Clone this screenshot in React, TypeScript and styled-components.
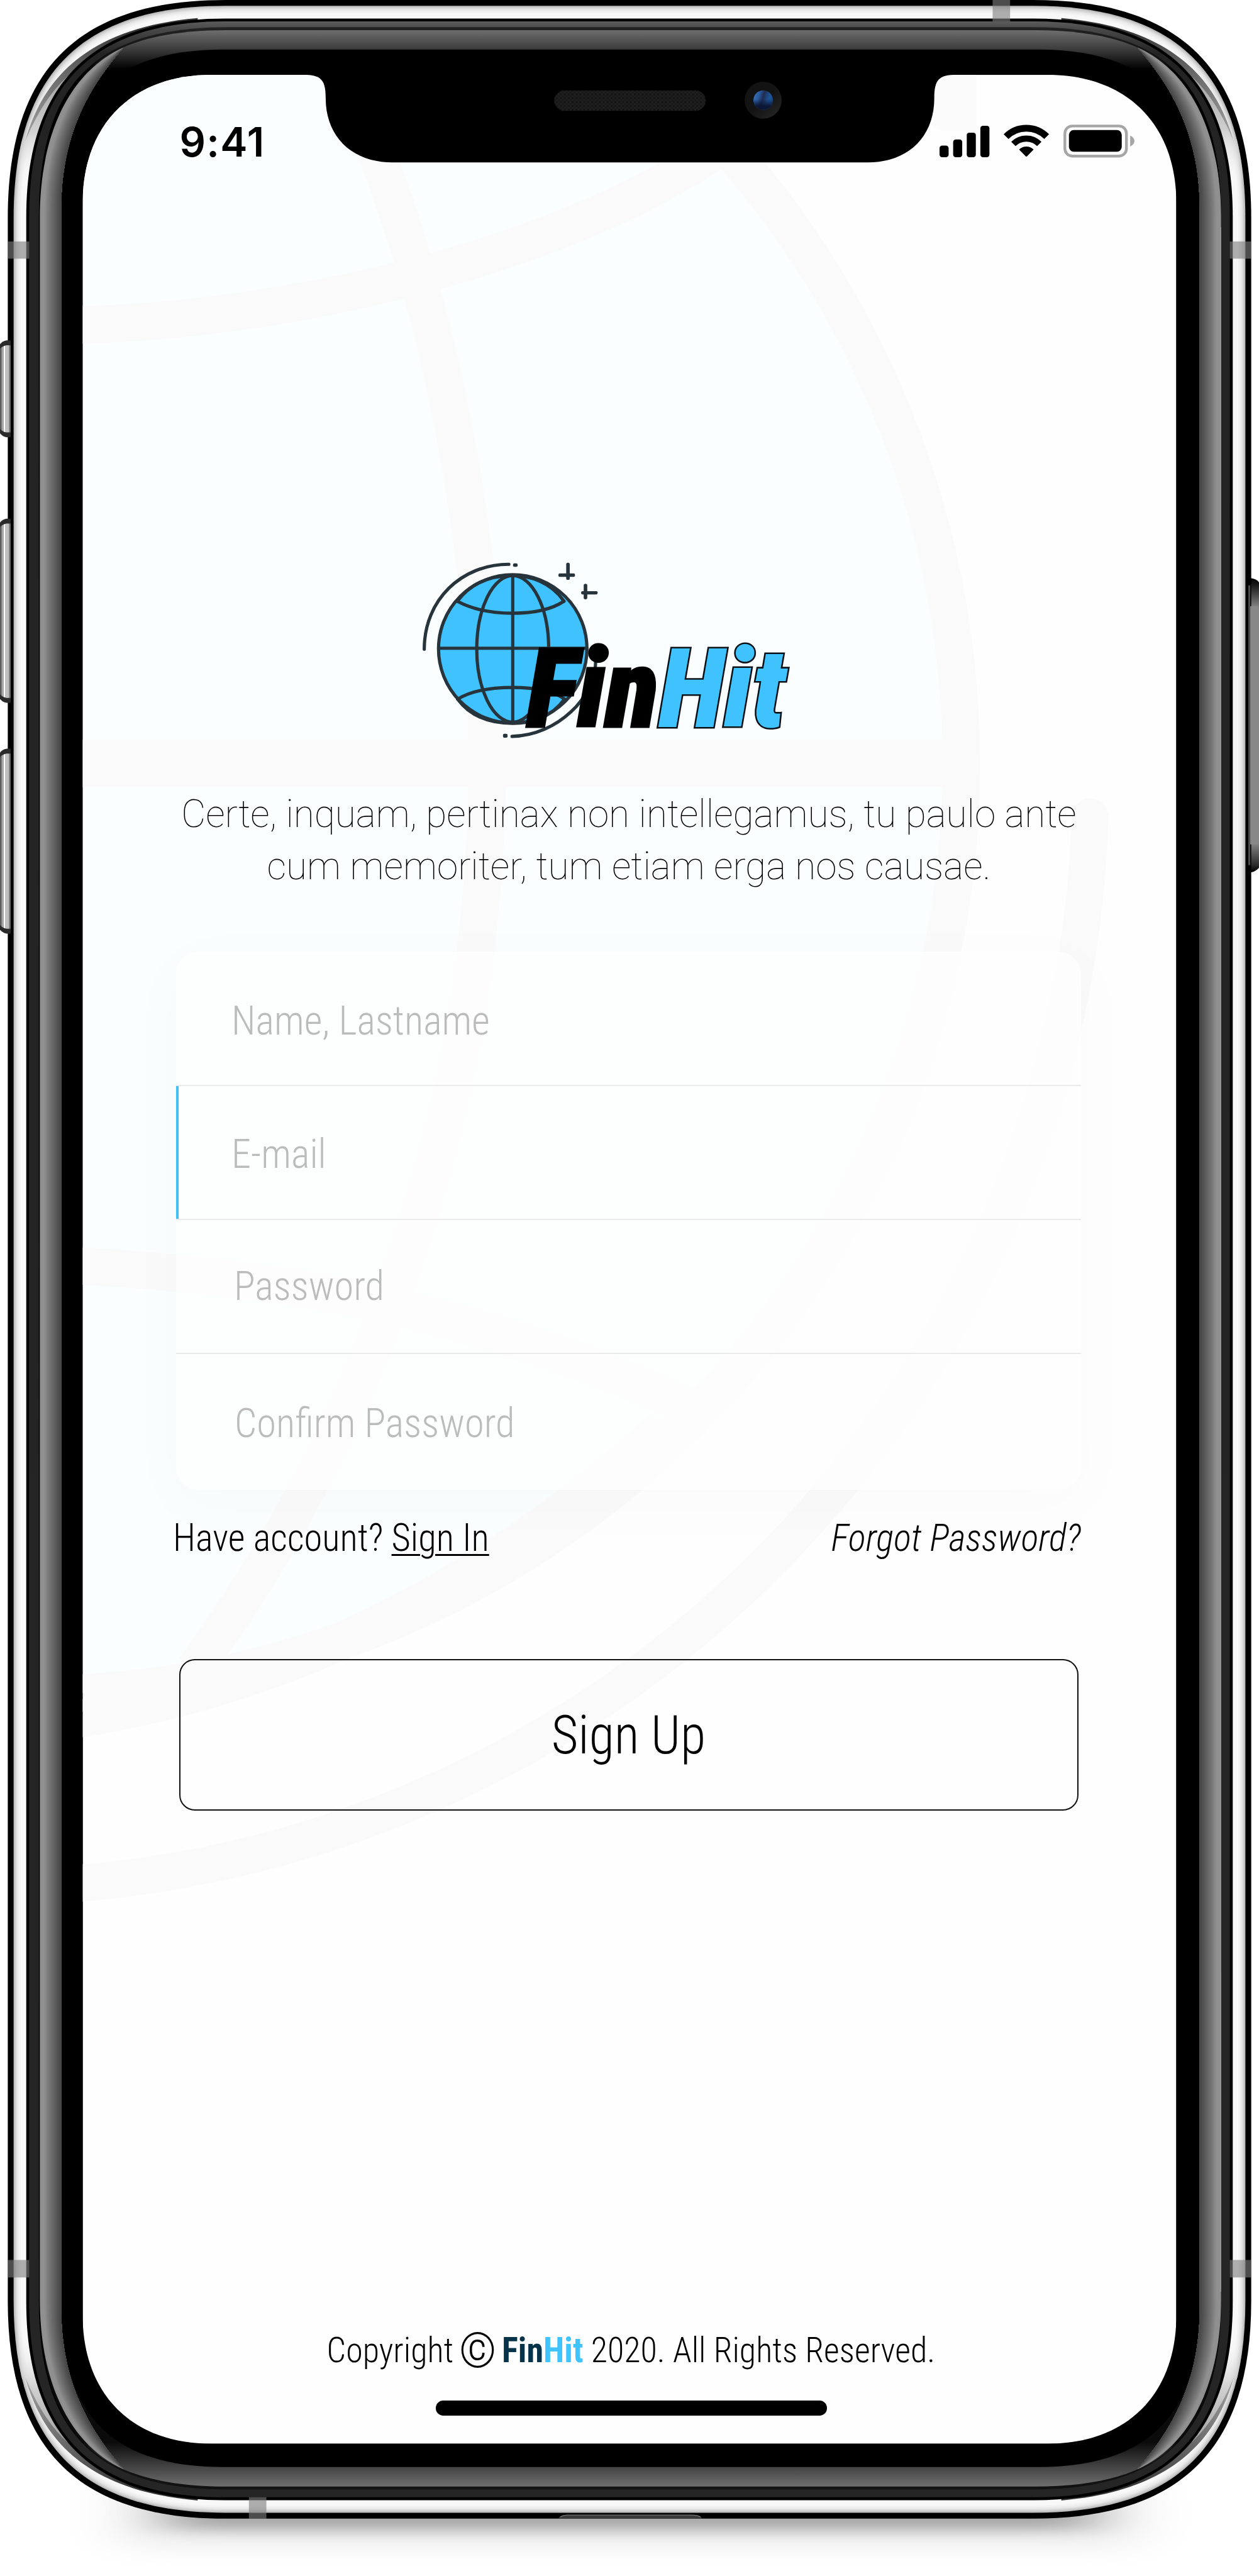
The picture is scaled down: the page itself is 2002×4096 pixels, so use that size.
import React from "react";
import styled, { createGlobalStyle } from "styled-components";

/* The artboard is 3885 x 7947 design units; everything is scaled down by one factor. */
const SCALE = 2002 / 3885;
const u = (n: number) => `${(n * SCALE).toFixed(2)}px`;

const GlobalStyle = createGlobalStyle`
  html, body { margin: 0; padding: 0; background: #fff; }
  *, *::before, *::after { box-sizing: border-box; }
`;

/* ---------- geometry helpers ---------- */

function squircle(x0: number, y0: number, x1: number, y1: number, l: number, c: number) {
  const k = l * (1 - c);
  return [
    `M${x0} ${y0 + l}`,
    `C${x0} ${y0 + k} ${x0 + k} ${y0} ${x0 + l} ${y0}`,
    `H${x1 - l}`,
    `C${x1 - k} ${y0} ${x1} ${y0 + k} ${x1} ${y0 + l}`,
    `V${y1 - l}`,
    `C${x1} ${y1 - k} ${x1 - k} ${y1} ${x1 - l} ${y1}`,
    `H${x0 + l}`,
    `C${x0 + k} ${y1} ${x0} ${y1 - k} ${x0} ${y1 - l}`,
    "Z",
  ].join(" ");
}

const mix = (a: number, b: number, t: number) => a + (b - a) * t;
const gray = (v: number) => `rgb(${Math.round(v)},${Math.round(v)},${Math.round(v)})`;

const rimShades: [number, string][] = [
  [0, "#bdbdbd"], [4, "#d0d0d0"], [8, "#e0e0e0"], [12, "#ebebeb"], [17, "#f2f2f2"], [22, "#f8f8f8"],
];

/* Side reflection: nested shapes from the outer edge of the glass to its inner edge. */
const GLOW_STEPS = 18;
const glowLayers = Array.from({ length: GLOW_STEPS }, (_, i) => {
  const t = i / GLOW_STEPS;
  const x = mix(123, 189, t);
  const cx = mix(225, 290, t);
  const cy = mix(215, 250, t);
  const end = mix(672, 640, t);
  const d =
    `M381 147 C${cx} ${cy} ${x} 400 ${x} ${end} V${7764 - end} ` +
    `C${x} 7364 ${cx} ${7764 - cy} 381 7617 C290 7514 189 7364 189 7124 V640 C189 400 290 250 381 147 Z`;
  const v = t < 0.2 ? 144 : mix(144, 66, Math.pow((t - 0.2) / 0.8, 0.85));
  return { d, fill: gray(v) };
});

/* ---------- device ---------- */

const Device = styled.main`
  position: relative;
  width: 2002px;
  height: 4096px;
  overflow: hidden;
  background: #fff;
  font-family: Roboto, "Liberation Sans", sans-serif;
  color: #000;
`;

const Artwork = styled.svg`
  position: absolute;
  inset: 0;
  width: 2002px;
  height: 4096px;
`;

function RimCorner({ transform }: { transform?: string }) {
  return (
    <g transform={transform}>
      <g clipPath="url(#rimClip)">
        <path d="M42 580 V430 H80 C110 360 150 290 207 237 H300 V580 Z" fill="url(#rimFade)" />
        <path d="M78 435 C125 270 240 88 610 56 L610 90 L300 240 L207 237 C150 290 110 360 78 435 Z" fill="url(#wedge)" />
      </g>
    </g>
  );
}

function Frame() {
  const buttons = [[1050, 1349], [1600, 2168], [2310, 2880]];
  return (
    <Artwork viewBox="0 0 3885 7947" preserveAspectRatio="none" aria-hidden>
      <defs>
        <linearGradient id="rimFade" x1="0" y1="240" x2="0" y2="560" gradientUnits="userSpaceOnUse">
          <stop offset="0" stopColor="#a0a0a0" />
          <stop offset=".5" stopColor="#c8c8c8" stopOpacity=".85" />
          <stop offset="1" stopColor="#f4f4f4" stopOpacity="0" />
        </linearGradient>
        <linearGradient id="wedge" x1="80" y1="430" x2="400" y2="80" gradientUnits="userSpaceOnUse">
          <stop offset="0" stopColor="#a2a2a2" />
          <stop offset=".35" stopColor="#777" />
          <stop offset="1" stopColor="#333" />
        </linearGradient>
        <linearGradient id="collar" x1="0" y1="66" x2="0" y2="7704" gradientUnits="userSpaceOnUse">
          <stop offset="0" stopColor="#5c5c5c" />
          <stop offset=".0028" stopColor="#4a4a4a" />
          <stop offset=".013" stopColor="#232323" />
          <stop offset="1" stopColor="#252525" />
        </linearGradient>
        <linearGradient id="lip" x1="0" y1="84" x2="0" y2="7680" gradientUnits="userSpaceOnUse">
          <stop offset="0" stopColor="#232323" />
          <stop offset=".02" stopColor="#000" />
          <stop offset=".97" stopColor="#000" />
          <stop offset=".99" stopColor="#121212" />
        </linearGradient>
        <linearGradient id="glass" x1="0" y1="93" x2="0" y2="7671" gradientUnits="userSpaceOnUse">
          <stop offset="0" stopColor="#6e6e6e" />
          <stop offset=".0079" stopColor="#3b3b3b" />
          <stop offset=".016" stopColor="#000" />
          <stop offset=".982" stopColor="#0b0b0b" />
          <stop offset=".9921" stopColor="#444" />
          <stop offset="1" stopColor="#6e6e6e" />
        </linearGradient>
        <linearGradient id="key" x1="0" y1="0" x2="33" y2="0" gradientUnits="userSpaceOnUse">
          <stop offset="0" stopColor="#5c5c5c" /><stop offset=".09" stopColor="#5c5c5c" />
          <stop offset=".09" stopColor="#858585" /><stop offset=".18" stopColor="#858585" />
          <stop offset=".18" stopColor="#a6a6a6" /><stop offset=".36" stopColor="#a6a6a6" />
          <stop offset=".36" stopColor="#fff" /><stop offset=".46" stopColor="#fff" />
          <stop offset=".46" stopColor="#bfbfbf" /><stop offset=".82" stopColor="#bfbfbf" />
          <stop offset=".82" stopColor="#9a9a9a" /><stop offset=".92" stopColor="#707070" />
          <stop offset="1" stopColor="#666" />
        </linearGradient>
        <linearGradient id="power" x1="0" y1="1784" x2="0" y2="2691" gradientUnits="userSpaceOnUse">
          <stop offset="0" stopColor="#000" /><stop offset=".025" stopColor="#1c1c1c" />
          <stop offset=".1" stopColor="#868686" /><stop offset=".9" stopColor="#868686" />
          <stop offset=".975" stopColor="#2c2c2c" /><stop offset="1" stopColor="#000" />
        </linearGradient>
        <linearGradient id="lens" x1="2325" y1="300" x2="2385" y2="318" gradientUnits="userSpaceOnUse">
          <stop offset="0" stopColor="#3672b4" /><stop offset=".25" stopColor="#28579a" />
          <stop offset=".45" stopColor="#1f2b50" /><stop offset=".75" stopColor="#1c5598" />
          <stop offset="1" stopColor="#184a86" />
        </linearGradient>
        <linearGradient id="lensShade" x1="0" y1="279" x2="0" y2="339" gradientUnits="userSpaceOnUse">
          <stop offset=".45" stopColor="#0c1533" stopOpacity="0" /><stop offset=".8" stopColor="#0c1533" stopOpacity=".95" />
        </linearGradient>
        <linearGradient id="lensRing" x1="2310" y1="260" x2="2400" y2="360" gradientUnits="userSpaceOnUse">
          <stop offset=".5" stopColor="#131313" /><stop offset="1" stopColor="#252525" />
        </linearGradient>
        <pattern id="mesh" width="12" height="12" patternUnits="userSpaceOnUse">
          <rect width="12" height="12" fill="#202020" />
          <rect width="6" height="6" fill="#131313" />
          <rect x="6" y="6" width="6" height="6" fill="#181818" />
        </pattern>
        <filter id="soft" x="-20%" y="-100%" width="140%" height="300%"><feGaussianBlur stdDeviation="90 20" /></filter>
        <filter id="softer" x="-20%" y="-100%" width="140%" height="300%"><feGaussianBlur stdDeviation="100 40" /></filter>
        <clipPath id="rimClip"><path d={squircle(42, 18, 3843, 7752, 654, 0.678)} /></clipPath>
        <clipPath id="screenClip"><path d={squircle(255, 231, 3630, 7539, 397, 0.615)} /></clipPath>
      </defs>

      <rect x="380" y="7650" width="3125" height="200" fill="#000" opacity=".09" filter="url(#softer)" />
      <rect x="520" y="7650" width="2845" height="155" fill="#000" opacity=".27" filter="url(#soft)" />

      <path d="M3852 1784 H3862 Q3876 1786 3885 1796 V2677 Q3876 2688 3862 2691 H3852 Z" fill="url(#power)" />

      <path d={squircle(24, 0, 3861, 7770, 672, 0.678)} fill="#000" />
      {rimShades.map(([o, fill]) => (
        <path key={o} d={squircle(42 + o, 18 + o, 3843 - o, 7752 - o, 654 - o, 0.678)} fill={fill} />
      ))}
      <RimCorner />
      <RimCorner transform="translate(3885 0) scale(-1 1)" />
      <RimCorner transform="translate(0 7770) scale(1 -1)" />
      <RimCorner transform="translate(3885 7770) scale(-1 -1)" />

      <path d={squircle(81, 57, 3804, 7713, 613, 0.672)} fill="#000" />
      <path d={squircle(90, 66, 3795, 7704, 604, 0.675)} fill="url(#collar)" />
      <path d={squircle(120, 84, 3768, 7680, 582, 0.7)} fill="url(#lip)" />
      <path d={squircle(123, 93, 3768, 7671, 577, 0.71)} fill="url(#glass)" />
      <path d={squircle(189, 153, 3702, 7611, 500, 0.68)} fill="#000" />
      {glowLayers.map((l, i) => <path key={i} d={l.d} fill={l.fill} />)}
      <g transform="translate(3891 0) scale(-1 1)">
        {glowLayers.map((l, i) => <path key={i} d={l.d} fill={l.fill} />)}
        <rect x="123" y="700" width="3" height="6370" fill="#999" />
      </g>

      {buttons.map(([a, b]) => (
        <g key={a}>
          <path d={`M33 ${a} H20 Q8 ${a + 2} 0 ${a + 12} V${b - 12} Q8 ${b - 2} 20 ${b} H33 Z`} fill="#2a2a2a" />
          <path d={`M33 ${a + 15} H20 Q8 ${a + 17} 0 ${a + 26} V${b - 26} Q8 ${b - 17} 20 ${b - 15} H33 Z`} fill="url(#key)" />
        </g>
      ))}
      <rect x="3852" y="1806" width="6" height="863" fill="#4c4c4c" />
      <rect x="3858" y="1870" width="24" height="735" fill="#888" />

      <g fill="#7e7e7e" opacity=".61">
        <rect x="24" y="745" width="66" height="53" />
        <rect x="3795" y="745" width="66" height="53" />
        <rect x="24" y="6972" width="66" height="54" />
        <rect x="3795" y="6972" width="66" height="54" />
        <rect x="3063" y="0" width="54" height="66" />
        <rect x="768" y="7704" width="54" height="66" />
      </g>
      <path d="M1722 7770 Q1732 7759 1752 7759 H2136 Q2158 7759 2168 7770 Z" fill="#3a3a3a" />
      <path d="M1728 7765 Q1738 7759 1752 7759 H2136 Q2152 7759 2162 7765" fill="none" stroke="#777" strokeWidth="2.5" />

      <g clipPath="url(#screenClip)">
        <rect x="255" y="231" width="3375" height="7308" fill="#fefefe" />
        <circle cx="96" cy="2357" r="2870" fill="#fafeff" />
        <g fill="none" stroke="#fbfafa" strokeWidth="116">
          <circle cx="96" cy="2357" r="2870" />
          <path d="M240 1003 C900 985 1700 800 2200 470 L2420 300" />
          <path d="M1070 200 L1165 480 C1400 1100 1503 1800 1503 2360 C1503 3400 1150 4400 600 5150" />
          <path d="M240 3905 C900 3940 1500 4050 2150 4350" />
          <path d="M240 5303 C900 5200 1500 4900 2050 4400" />
          <path d="M240 2355 H2920" strokeWidth="146" />
          <path d="M3364 2520 A3408 3412 0 0 1 120 5818" strokeLinecap="round" strokeWidth="114" />
        </g>
        <path d="M2840 231 H3013 V404 H2910 Q2870 390 2840 350 Z" fill="#fbfbfb" />
      </g>

      <path d="M925 225 V231 H937 C990 231 1005 245 1005 303 C1005 420 1085 501 1211 501 H2678 C2804 501 2883 420 2883 303 C2883 245 2898 231 2951 231 H2965 V225 Z" fill="#000" />
      <path d="M1734 279 H2154 Q2178 290 2178 310.500 Q2178 331 2154 342 H1734 Q1710 331 1710 310.500 Q1710 290 1734 279 Z" fill="url(#mesh)" />
      <circle cx="2355" cy="309" r="57" fill="url(#lensRing)" />
      <circle cx="2355" cy="309" r="30" fill="url(#lens)" />
      <circle cx="2355" cy="309" r="30" fill="url(#lensShade)" />
    </Artwork>
  );
}

/* ---------- screen ---------- */

const Screen = styled.section`
  position: relative;
  display: flex;
  flex-direction: column;
  margin: 0 ${u(255)};
  padding-top: ${u(231)};
  width: ${u(3375)};
`;

const StatusBar = styled.header`
  display: flex;
  align-items: center;
  justify-content: space-between;
  height: ${u(418)};
  padding: 0 ${u(128)} 0 ${u(299)};
`;

const Clock = styled.time`
  font: 600 ${u(126)} / 1 Inter, sans-serif;
  letter-spacing: ${u(2.5)};
`;

const StatusIcons = styled.div`
  display: flex;
  align-items: center;
  margin-bottom: ${u(9)};
`;

const StatusIcon = styled.svg<{ $w: number; $gap?: number }>`
  width: ${p => u(p.$w)};
  height: ${u(102)};
  margin-left: ${p => u(p.$gap ?? 0)};
`;

const Logo = styled.div`
  position: relative;
  width: ${u(1140)};
  height: ${u(560)};
  margin: ${u(1076)} 0 0 ${u(1045)};
`;

const Globe = styled.svg`
  display: block;
  width: 100%;
  height: 100%;
`;

const Wordmark = styled.div`
  position: absolute;
  left: ${u(325)};
  top: ${u(233)};
  font-size: ${u(341)};
  line-height: 1;
  font-weight: 900;
  font-style: italic;
  font-stretch: 75%;
  white-space: nowrap;
  paint-order: stroke fill;
  -webkit-text-stroke: ${u(6)} #000;
`;

const Hit = styled.span`
  color: #40c2ff;
  -webkit-text-stroke: ${u(10)} #0a1016;
`;

const Tagline = styled.p`
  margin: ${u(145.7)} 0 0;
  padding-right: ${u(4)};
  font-size: ${u(117)};
  line-height: ${u(162.6)};
  font-weight: 100;
  text-align: center;
  white-space: nowrap;
  color: #000;
`;

const Form = styled.div`
  width: ${u(2791)};
  margin: ${u(181)} 0 0 ${u(289)};
  border-radius: ${u(70)};
  background: rgba(254, 254, 254, 0.8);
  box-shadow: 0 ${u(40)} ${u(190)} ${u(30)} rgba(0, 0, 0, 0.014);
`;

const Field = styled.div<{ $active?: boolean; $last?: boolean; $dx?: number; $dy?: number }>`
  display: flex;
  align-items: center;
  height: ${p => u(p.$last ? 418 : 414)};
  padding: ${p => u(Math.max(0, 2 * (p.$dy ?? 0)))} 0 ${p => u(Math.max(0, -2 * (p.$dy ?? 0)))} ${p => u(170 + (p.$dx ?? 0))};
  box-shadow: ${p => (p.$active ? `inset ${u(8)} 0 0 #46bff0` : "none")};
  border-bottom: ${p => (p.$last ? "0" : `${u(5)} solid #ebebeb`)};
`;

const Condensed = styled.span<{ $k?: number; $origin?: string }>`
  display: inline-block;
  font-weight: 300;
  font-stretch: 75%;
  white-space: nowrap;
  transform: scaleX(${p => p.$k ?? 0.963});
  transform-origin: ${p => p.$origin ?? "left"} center;
`;

const Placeholder = styled(Condensed)`
  font-size: ${u(126)};
  line-height: 1;
  color: #bbb;
`;

const Links = styled.div`
  display: flex;
  justify-content: space-between;
  margin: ${u(79.4)} ${u(294)} 0 ${u(279)};
  font-size: ${u(117)};
  line-height: ${u(140)};
`;

const SignIn = styled.a`
  text-decoration: underline;
  text-decoration-thickness: ${u(5)};
  text-underline-offset: ${u(10)};
`;

const Forgot = styled(Condensed)`
  font-style: italic;
`;

const SignUp = styled.button`
  display: flex;
  align-items: center;
  justify-content: center;
  width: ${u(2776)};
  height: ${u(468)};
  margin: ${u(303)} 0 0 ${u(298)};
  padding: ${u(6)} ${u(4)} 0 0;
  border: ${u(5)} solid #111;
  border-radius: ${u(48)};
  background: transparent;
  color: #000;
  font: 300 ${u(166)} / 1 Roboto, sans-serif;
`;

const Footer = styled.footer`
  display: flex;
  align-items: baseline;
  justify-content: center;
  margin-top: ${u(1601)};
  padding-left: ${u(8)};
  height: ${u(130)};
  font-size: ${u(109)};
  line-height: ${u(130)};
`;

const CopyrightLine = styled(Condensed)`
  transform-origin: center;
`;

const Mark = styled.span`
  margin: 0 ${u(18)} 0 ${u(17)};
  font-size: ${u(150)};
  line-height: 0;
  vertical-align: ${u(-16)};
  font-weight: 300;
  font-stretch: 100%;
`;

const Brand = styled.b<{ $tone: string }>`
  font-weight: 700;
  color: ${p => p.$tone};
`;

const HomeIndicator = styled.div`
  width: ${u(1207)};
  height: ${u(46)};
  margin: ${u(89)} 0 0 ${u(1090)};
  border-radius: ${u(23)};
  background: #000;
`;

function GlobeArt() {
  return (
    <Globe viewBox="1300 1725 1140 560" aria-hidden>
      <circle cx="1582" cy="2002" r="227" fill="#40c2ff" />
      <g fill="none" stroke="#27343c" strokeWidth="10" strokeLinecap="round">
        <circle cx="1582" cy="2002" r="229" />
        <ellipse cx="1582" cy="2002" rx="111" ry="226" />
        <path d="M1582 1776 V2230" />
        <path d="M1354 2000 H1811" />
        <path d="M1411 1855 Q1480 1892 1582 1892 T1740 1855" />
        <path d="M1411 1855 C1460 1790 1530 1776 1582 1776 S1700 1796 1740 1855" />
        <path d="M1412 2157 Q1470 2121 1582 2121 T1742 2157" />
        <path d="M1412 2157 C1460 2222 1530 2232 1582 2232 S1700 2216 1742 2157" />
        <path d="M1309 2003 C1309 1850 1425 1741 1570 1741" />
        <path d="M1580 2272 C1720 2270 1838 2150 1838 2040" />
      </g>
      <g fill="#27343c">
        <rect x="1583" y="1738" width="14" height="11" rx="4" />
        <rect x="1552" y="2264" width="14" height="12" rx="4" />
        <rect x="1747" y="1736" width="11" height="53" rx="5" />
        <rect x="1723" y="1769" width="51" height="11" rx="4" />
        <rect x="1801" y="1801" width="11" height="48" rx="5" />
        <rect x="1793" y="1824" width="51" height="10" rx="4" />
      </g>
    </Globe>
  );
}

export default function App() {
  return (
    <Device>
      <GlobalStyle />
      <Frame />
      <Screen>
        <StatusBar>
          <Clock>9:41</Clock>
          <StatusIcons>
            <StatusIcon $w={154} viewBox="0 0 154 102">
              <rect x="0" y="65" width="28" height="36" rx="8" />
              <rect x="42" y="46" width="28" height="55" rx="8" />
              <rect x="84" y="25" width="28" height="76" rx="8" />
              <rect x="126" y="4" width="28" height="97" rx="8" />
            </StatusIcon>
            <StatusIcon $w={140} $gap={43} viewBox="0 0 140 102">
              <g fill="none" stroke="#000">
                <path d="M7.400 37.400 A88.500 88.500 0 0 1 132.600 37.400" strokeWidth="21" />
                <path d="M30 60 A56.500 56.500 0 0 1 110 60" strokeWidth="19" />
              </g>
              <path d="M47.500 77 A32 32 0 0 1 92.500 77 L73 97 Q70 101 67 97 Z" />
            </StatusIcon>
            <StatusIcon $w={220} $gap={45} viewBox="0 0 220 102">
              <rect x="4.500" y="4.500" width="190" height="93" rx="23" fill="none" stroke="#a6a6a6" strokeWidth="8.500" />
              <rect x="17" y="17" width="163" height="67" rx="15" />
              <path d="M206 34 Q219 40 219 51 T206 68 Z" fill="#a6a6a6" />
            </StatusIcon>
          </StatusIcons>
        </StatusBar>

        <Logo>
          <GlobeArt />
          <Wordmark>Fin<Hit>Hit</Hit></Wordmark>
        </Logo>

        <Tagline>
          Certe, inquam, pertinax non intellegamus, tu paulo ante
          <br />
          cum memoriter, tum etiam erga nos causae.
        </Tagline>

        <Form>
          <Field $dy={8}><Placeholder>Name, Lastname</Placeholder></Field>
          <Field $active $dy={6}><Placeholder>E-mail</Placeholder></Field>
          <Field $dx={8} $dy={-1}><Placeholder>Password</Placeholder></Field>
          <Field $last $dx={10} $dy={5}><Placeholder>Confirm Password</Placeholder></Field>
        </Form>

        <Links>
          <Condensed $k={0.972}>Have account? <SignIn>Sign In</SignIn></Condensed>
          <Forgot $k={0.972} $origin="right">Forgot Password?</Forgot>
        </Links>

        <SignUp type="button"><Condensed $origin="center">Sign Up</Condensed></SignUp>

        <Footer>
          <CopyrightLine>
            Copyright<Mark>©</Mark><Brand $tone="#06324a">Fin</Brand><Brand $tone="#40c4ff">Hit</Brand> 2020. All Rights Reserved.
          </CopyrightLine>
        </Footer>
        <HomeIndicator />
      </Screen>
    </Device>
  );
}
